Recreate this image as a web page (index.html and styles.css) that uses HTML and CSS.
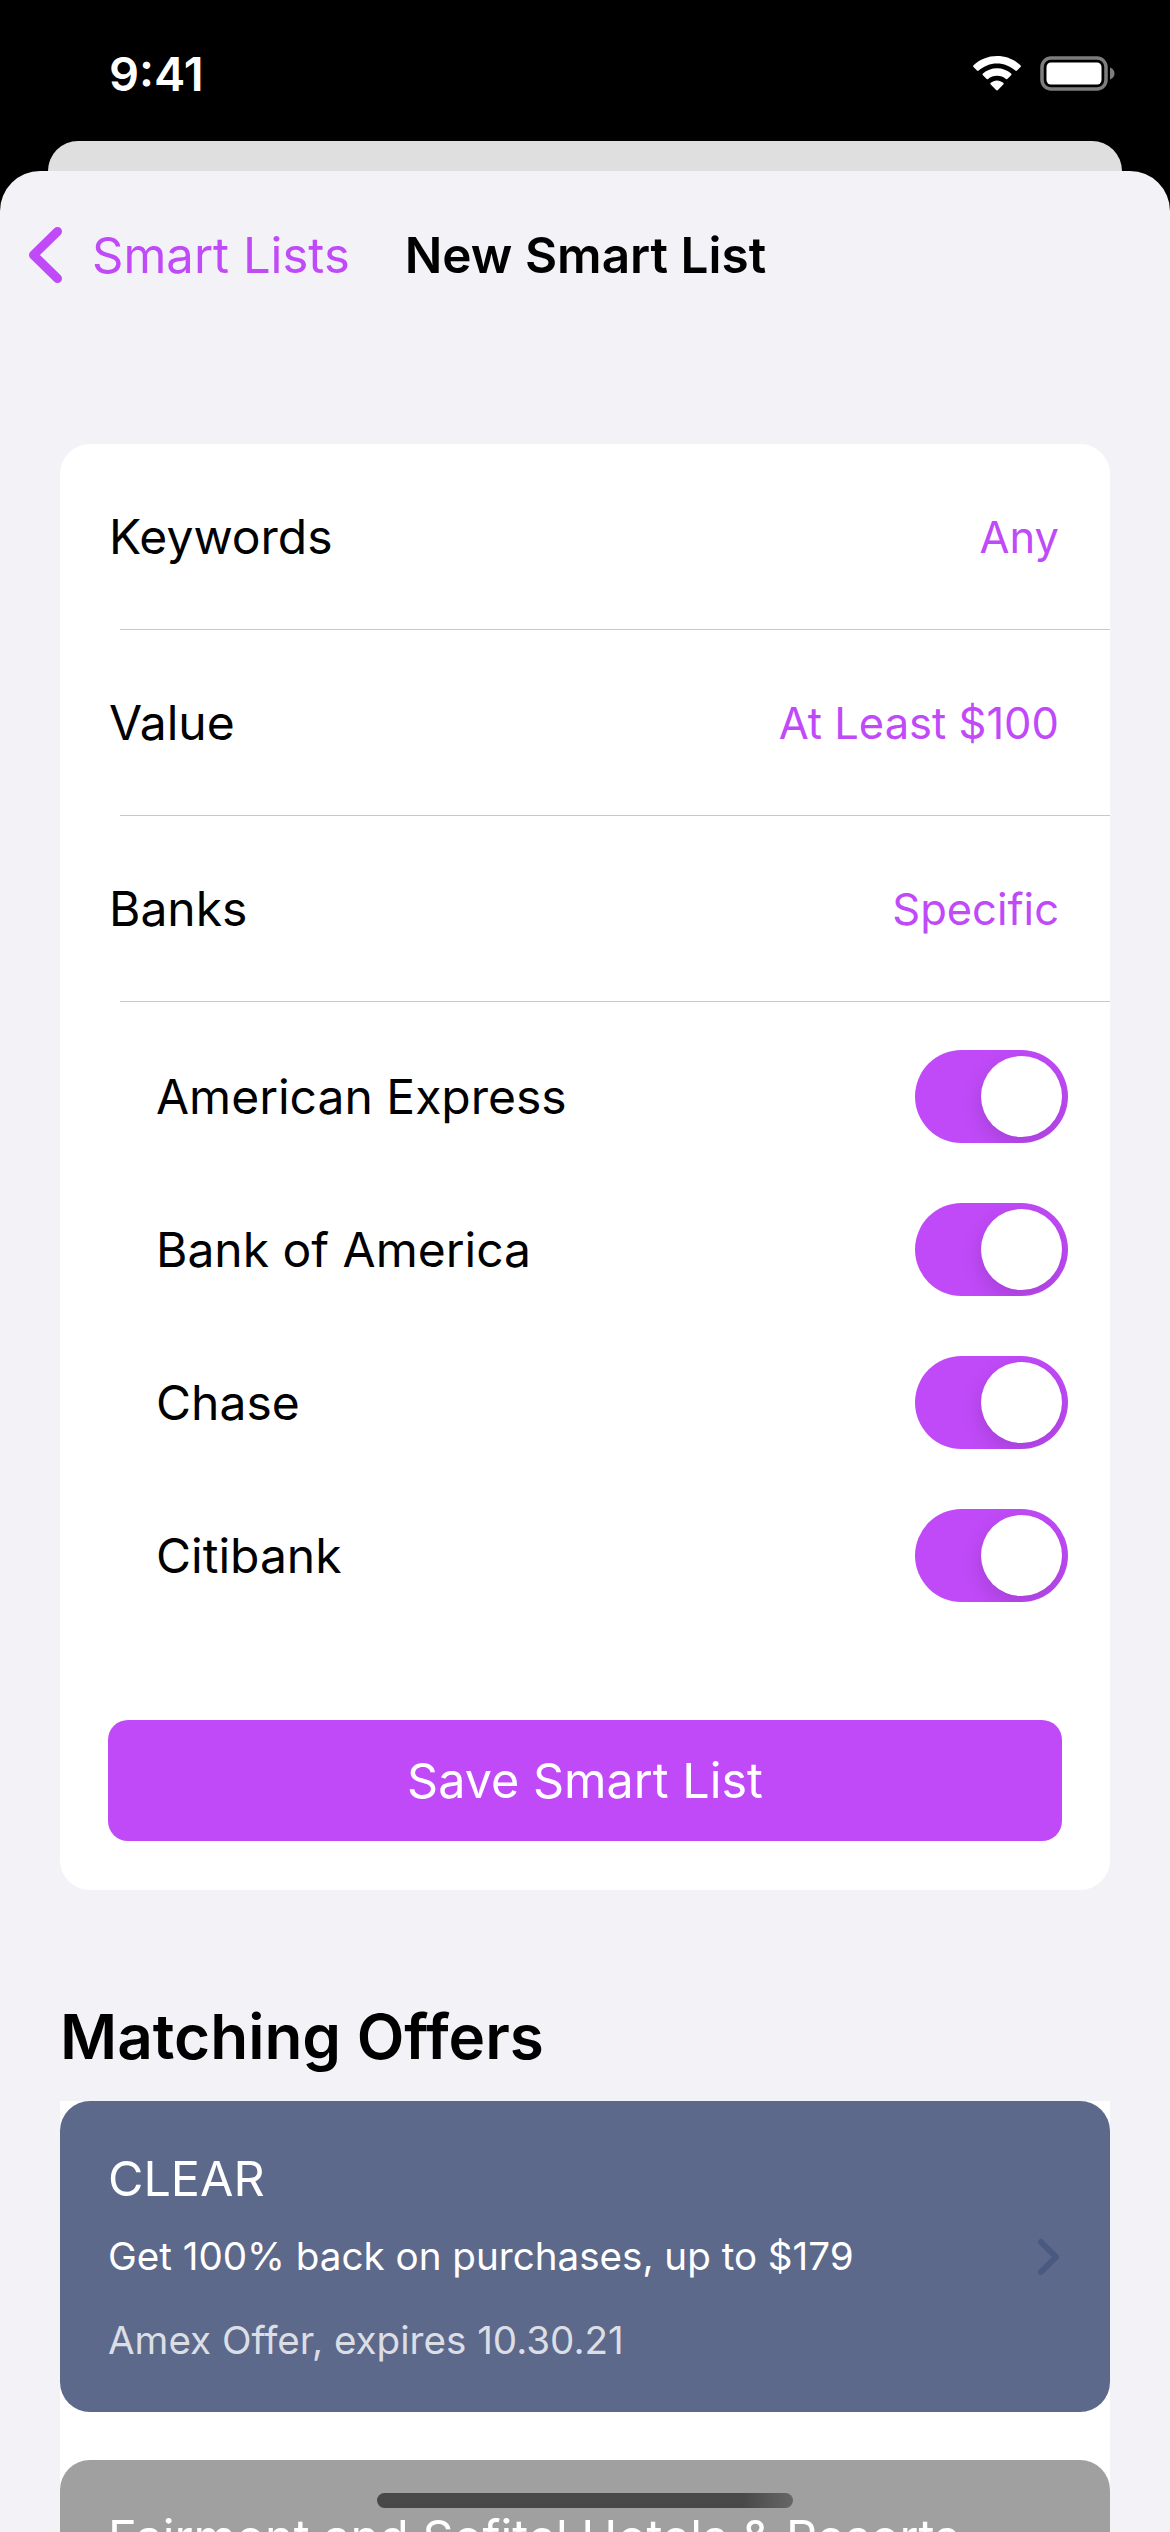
FILE: index.html
```html
<!DOCTYPE html>
<html lang="en">
<head>
    <meta charset="UTF-8">
    <meta name="viewport" content="width=device-width, initial-scale=1.0">
    <title>New Smart List</title>
    <link rel="stylesheet" href="styles.css">
</head>
<body>
<div class="status-bar">
    <span class="time">9:41</span>
    <div class="status-icons">
        <svg class="wifi" width="48" height="35" viewBox="0 0 48 35">
            <path d="M24 0C15 0 6.800 3.400 0.500 9.300C0 9.800 0 10.500 0.500 11L4 14.600C4.500 15.100 5.200 15.100 5.700 14.600C10.600 10.200 17 7.500 24 7.500C31 7.500 37.400 10.200 42.300 14.600C42.800 15.100 43.500 15.100 44 14.600L47.500 11C48 10.500 48 9.800 47.500 9.300C41.200 3.400 33 0 24 0Z" fill="#fff"/>
            <path d="M24 12.200C18.600 12.200 13.700 14.200 9.900 17.600C9.400 18.100 9.400 18.800 9.900 19.300L13.400 22.800C13.900 23.300 14.600 23.300 15.100 22.900C17.500 20.900 20.600 19.700 24 19.700C27.400 19.700 30.500 20.900 32.900 22.900C33.400 23.300 34.100 23.300 34.600 22.800L38.100 19.300C38.600 18.800 38.600 18.100 38.100 17.600C34.300 14.200 29.400 12.200 24 12.200Z" fill="#fff"/>
            <path d="M24 24.400C21.600 24.400 19.400 25.300 17.700 26.800C17.200 27.300 17.200 28 17.700 28.500L23.100 34C23.600 34.500 24.400 34.500 24.900 34L30.300 28.500C30.800 28 30.800 27.300 30.300 26.800C28.600 25.300 26.400 24.400 24 24.400Z" fill="#fff"/>
        </svg>
        <svg class="battery" width="75" height="35" viewBox="0 0 75 35">
            <rect x="2" y="2" width="64" height="31" rx="9" fill="none" stroke="#7d7d7d" stroke-width="3.500"/>
            <rect x="6.500" y="6.500" width="55" height="22" rx="4.500" fill="#fff"/>
            <path d="M70 11.500C72.700 12.500 74.500 14.800 74.500 17.500C74.500 20.200 72.700 22.500 70 23.500Z" fill="#7d7d7d"/>
        </svg>
    </div>
</div>
<div class="sheet-back"></div>
<div class="sheet">
    <header class="nav">
        <a class="back-link">
            <svg class="back-chevron" width="33" height="56" viewBox="0 0 33 56">
                <path d="M28.500 4.500L4.500 28L28.500 51.500" fill="none" stroke="#c04af8" stroke-width="9" stroke-linecap="round" stroke-linejoin="round"/>
            </svg>
            <span>Smart Lists</span>
        </a>
        <h1 class="nav-title">New Smart List</h1>
    </header>

    <section class="form-card">
        <div class="row"><span>Keywords</span><span class="row-value">Any</span></div>
        <div class="row"><span>Value</span><span class="row-value">At Least $100</span></div>
        <div class="row"><span>Banks</span><span class="row-value">Specific</span></div>
        <div class="bank-list">
            <div class="bank"><span>American Express</span><span class="toggle"></span></div>
            <div class="bank"><span>Bank of America</span><span class="toggle"></span></div>
            <div class="bank"><span>Chase</span><span class="toggle"></span></div>
            <div class="bank"><span>Citibank</span><span class="toggle"></span></div>
        </div>
        <button class="save-button">Save Smart List</button>
    </section>

    <h2 class="section-title">Matching Offers</h2>

    <section class="offers">
        <article class="offer offer-clear">
            <div class="offer-body">
                <div class="offer-name">CLEAR</div>
                <div class="offer-desc">Get 100% back on purchases, up to $179</div>
                <div class="offer-meta">Amex Offer, expires 10.30.21</div>
            </div>
            <svg class="offer-chevron" width="21" height="36" viewBox="0 0 21 36">
                <path d="M3 3L18 18L3 33" fill="none" stroke="#4a5981" stroke-width="6" stroke-linecap="round" stroke-linejoin="round"/>
            </svg>
        </article>
        <article class="offer offer-grey">
            <div class="offer-body">
                <div class="offer-name">Fairmont and Sofitel Hotels &amp; Resorts</div>
            </div>
        </article>
    </section>
</div>
<div class="home-indicator"></div>
</body>
</html>
```

FILE: styles.css
```css
* {
    margin: 0;
    padding: 0;
    box-sizing: border-box;
}

html, body {
    height: 2532px;
    overflow: hidden;
}

body {
    position: relative;
    background-color: #000;
    font-family: 'Inter', 'Liberation Sans', sans-serif;
    color: #000;
}

.status-bar {
    height: 141px;
    padding: 56px 55px 0 109px;
    display: flex;
    justify-content: space-between;
    align-items: flex-start;
    color: white;
}

.time {
    font-size: 47px;
    font-weight: 600;
    line-height: 36px;
}

.status-icons {
    display: flex;
    gap: 19px;
}

.sheet-back {
    height: 30px;
    margin: 0 48px;
    background-color: #dfdfdf;
    border-radius: 30px 30px 0 0;
}

.sheet {
    height: 2361px;
    background-color: #f2f2f7;
    border-radius: 40px 40px 0 0;
    overflow: hidden;
}

.nav {
    height: 273px;
    padding: 56px 0 0 29px;
    display: flex;
    align-items: flex-start;
}

.back-link {
    display: flex;
    align-items: center;
    gap: 30px;
    height: 56px;
    color: #c04af8;
    font-size: 49px;
}

.nav-title {
    margin-left: 55px;
    font-size: 49.500px;
    font-weight: 600;
    line-height: 56px;
}

.form-card {
    margin: 0 60px;
    height: 1446px;
    background-color: white;
    border-radius: 30px;
}

.row {
    height: 186px;
    margin-left: 60px;
    padding-right: 51px;
    border-bottom: 1px solid #c8c8ca;
    display: flex;
    justify-content: space-between;
    align-items: center;
    font-size: 48px;
}

.row span:first-child {
    margin-left: -11px;
}

.row-value {
    color: #c04af8;
    font-size: 43.500px;
}

.bank-list {
    padding: 48px 42px 0 96px;
    display: flex;
    flex-direction: column;
    gap: 60px;
}

.bank {
    height: 93px;
    display: flex;
    justify-content: space-between;
    align-items: center;
    font-size: 48px;
}

.toggle {
    position: relative;
    width: 153px;
    height: 93px;
    background-color: #c04af8;
    border-radius: 47px;
    overflow: hidden;
}

.toggle::after {
    content: '';
    position: absolute;
    top: 6px;
    right: 6px;
    width: 81px;
    height: 81px;
    background-color: white;
    border-radius: 50%;
    box-shadow: 0 8px 22px rgba(0, 0, 0, 0.14);
}

.save-button {
    display: block;
    width: 954px;
    height: 121px;
    margin: 118px 0 0 48px;
    background-color: #c04af8;
    color: white;
    border: none;
    border-radius: 20px;
    font-family: inherit;
    font-size: 48.500px;
}

.section-title {
    margin: 114px 0 32px 60px;
    font-size: 62px;
    font-weight: 600;
    line-height: 65px;
}

.offers {
    margin: 0 60px;
    background-color: white;
    display: flex;
    flex-direction: column;
    gap: 48px;
}

.offer {
    height: 311px;
    padding: 0 48px;
    border-radius: 30px;
    color: white;
    display: flex;
    justify-content: space-between;
    align-items: center;
}

.offer-clear {
    background-color: #5c698b;
}

.offer-grey {
    background-color: #a0a0a0;
    align-items: flex-start;
}

.offer-grey .offer-body {
    padding-top: 48px;
}

.offer-name {
    font-size: 48.500px;
    line-height: 60px;
}

.offer-desc {
    margin-top: 22px;
    font-size: 38.600px;
    line-height: 50px;
}

.offer-meta {
    margin-top: 34px;
    font-size: 38.600px;
    line-height: 50px;
    color: #dcdee6;
}

.offer-chevron {
    margin-right: 3px;
}

.home-indicator {
    position: absolute;
    left: 377px;
    top: 2493px;
    width: 416px;
    height: 15px;
    background: linear-gradient(to right, rgba(0, 0, 0, 0.55) 88%, rgba(0, 0, 0, 0.36) 100%);
    border-radius: 8px;
}
```
